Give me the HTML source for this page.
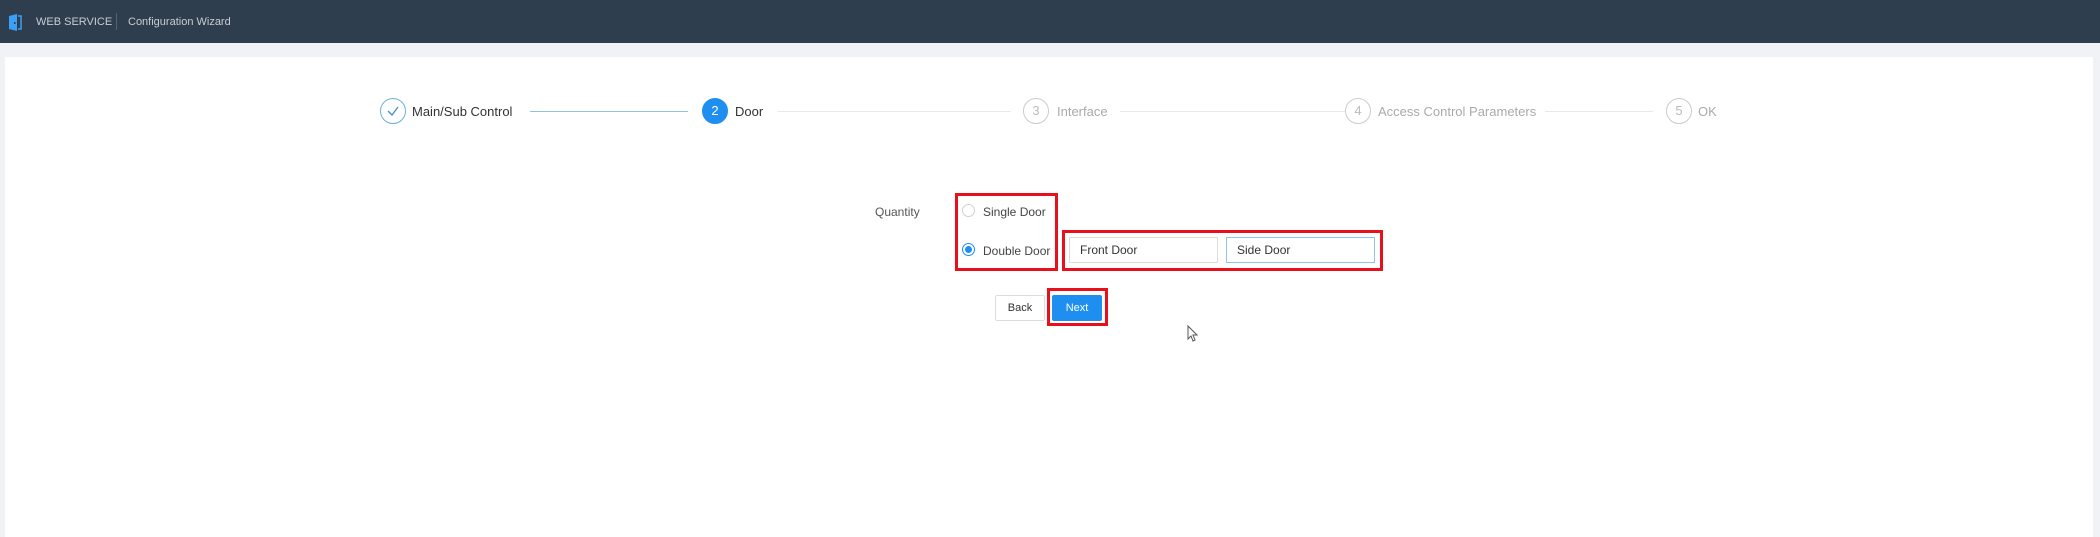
<!DOCTYPE html>
<html><head><meta charset="utf-8"><style>
*{box-sizing:border-box;margin:0;padding:0}
body{width:2100px;height:530px;background:#f0f2f5;font-family:"Liberation Sans",sans-serif;position:relative;overflow:hidden;color:#333}
.hdr{position:absolute;left:0;top:0;width:2100px;height:43px;background:#2f3e4f}
.a{position:absolute;white-space:nowrap}
.panel{position:absolute;left:5px;top:57px;width:2088px;height:480px;background:#fff}
.c{position:absolute;width:26px;height:26px;border-radius:50%;border:1px solid #ccc;color:#bbb;font-size:13px;text-align:center;line-height:24px}
.st{font-size:13px;top:104px}
.ln{position:absolute;height:1px;top:111px;background:#e8e8e8}
.red{position:absolute;border:3px solid #e8101c}
.inp{position:absolute;height:26px;border:1px solid #ddd;font-size:12px;line-height:24px;padding-left:10px;color:#333}
.rad{position:absolute;width:13px;height:13px;border-radius:50%;border:1px solid #d0d0d0}
</style></head><body>
<div class="hdr">
<svg class="a" style="left:8px;top:14px" width="14" height="17" viewBox="0 0 14 17"><path d="M1 2 L9 0 L9 17 L1 15Z" fill="#3a9ff5"/><path d="M10 2 L13 2 L13 15 L10 15" fill="none" stroke="#3a9ff5" stroke-width="1.5"/><rect x="6" y="8" width="1.5" height="2" fill="#2f3e4f"/></svg>
<div class="a" style="left:36px;top:16px;font-size:11px;color:#c8cdd3">WEB SERVICE</div>
<div class="a" style="left:116px;top:13px;width:1px;height:17px;background:#55626f"></div>
<div class="a" style="left:128px;top:16px;font-size:11px;color:#c8cdd3">Configuration Wizard</div>
</div>
<div class="panel"></div>
<div class="c" style="left:380px;top:98px;border-color:#6cb0d8"><svg width="14" height="12" viewBox="0 0 14 12" style="margin-top:6px"><path d="M2 6 L6 10 L12 2" fill="none" stroke="#3a8fd0" stroke-width="1.3"/></svg></div>
<div class="a st" style="left:412px;color:#333">Main/Sub Control</div>
<div class="ln" style="left:530px;width:158px;background:#8ec3dc"></div>
<div class="c" style="left:702px;top:98px;background:#1e8ff0;border-color:#1e8ff0;color:#fff">2</div>
<div class="a st" style="left:735px;color:#333">Door</div>
<div class="ln" style="left:778px;width:233px"></div>
<div class="c" style="left:1023px;top:98px">3</div>
<div class="a st" style="left:1057px;color:#aaa">Interface</div>
<div class="ln" style="left:1120px;width:225px"></div>
<div class="c" style="left:1345px;top:98px">4</div>
<div class="a st" style="left:1378px;color:#aaa">Access Control Parameters</div>
<div class="ln" style="left:1545px;width:108px"></div>
<div class="c" style="left:1666px;top:98px">5</div>
<div class="a st" style="left:1698px;color:#aaa">OK</div>

<div class="a" style="left:875px;top:205px;font-size:12px;color:#555">Quantity</div>
<div class="red" style="left:955px;top:193px;width:103px;height:78px"></div>
<div class="rad" style="left:962px;top:204px"></div>
<div class="a" style="left:983px;top:205px;font-size:12px;color:#444">Single Door</div>
<div class="rad" style="left:962px;top:243px;border-color:#1e8ff0"><div style="width:7px;height:7px;border-radius:50%;background:#1e8ff0;margin:2px"></div></div>
<div class="a" style="left:983px;top:244px;font-size:12px;color:#444">Double Door</div>
<div class="red" style="left:1062px;top:230px;width:321px;height:41px"></div>
<div class="inp" style="left:1069px;top:237px;width:149px">Front Door</div>
<div class="inp" style="left:1226px;top:237px;width:149px;border-color:#8cc4ec">Side Door</div>
<div class="red" style="left:1047px;top:288px;width:61px;height:38px"></div>
<div class="inp" style="left:995px;top:295px;width:50px;padding:0;text-align:center;font-size:11px;border-radius:2px">Back</div>
<div class="inp" style="left:1052px;top:295px;width:50px;padding:0;text-align:center;font-size:11px;background:#1e8ff0;border-color:#1e8ff0;color:#fff;border-radius:2px">Next</div>
<svg class="a" style="left:1187px;top:325px" width="12" height="17" viewBox="0 0 12 17"><path d="M1 1 L1 14 L4 11 L6 16 L8 15 L6 10 L10 10Z" fill="#fff" stroke="#555" stroke-width="1"/></svg>
</body></html>
